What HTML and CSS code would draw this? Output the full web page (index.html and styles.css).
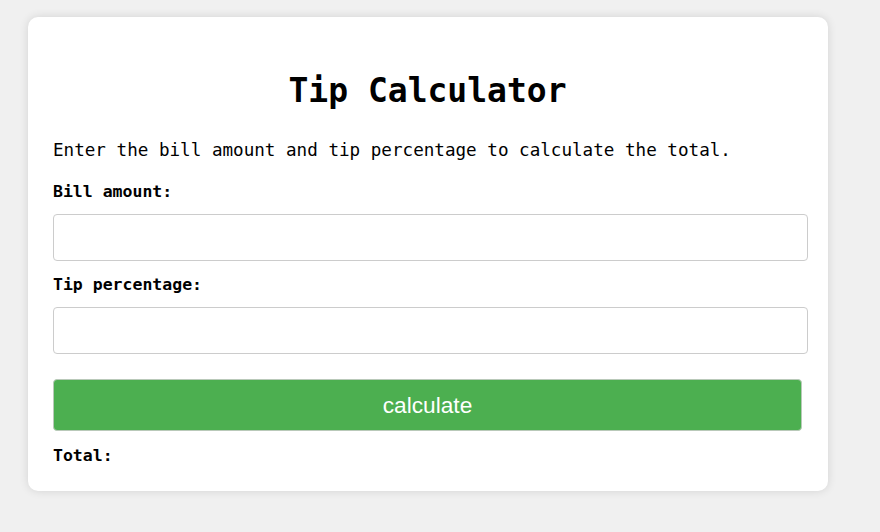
FILE: index.html
```html
<!DOCTYPE html>
<html>
<head>
<meta charset="utf-8">
<link rel="stylesheet" href="styles.css">
</head>
<body>
<div class="card">
  <h1 class="title">Tip Calculator</h1>
  <p class="intro">Enter the bill amount and tip percentage to calculate the total.</p>
  <label class="lbl lbl-bill" for="bill">Bill amount:</label>
  <input class="field field-bill" id="bill" type="text">
  <label class="lbl lbl-tip" for="tip">Tip percentage:</label>
  <input class="field field-tip" id="tip" type="text">
  <button class="calc">calculate</button>
  <div class="lbl total">Total:</div>
</div>
</body>
</html>
```
FILE: styles.css
```css
html, body {
  margin: 0;
  padding: 0;
  background: #f0f0f0;
  height: 100%;
}
body {
  font-family: "DejaVu Sans Mono", "Liberation Mono", monospace;
  color: #000;
}
.card {
  box-sizing: border-box;
  width: 800px;
  margin: 17px 0 0 28px;
  background: #fff;
  border-radius: 10px;
  box-shadow: 0 0 10px rgba(0, 0, 0, 0.12);
  padding: 54px 20px 24px 25px;
  display: flex;
  flex-direction: column;
  align-items: flex-start;
}
.title {
  align-self: stretch;
  text-align: center;
  font-size: 33px;
  line-height: 40px;
  margin: 0;
  font-weight: bold;
  padding-right: 6px;
}
.intro {
  margin: 27px 0 0;
  font-size: 17.6px;
  line-height: 24px;
}
.lbl {
  font-size: 16.5px;
  line-height: 22px;
  font-weight: bold;
}
.lbl-bill { margin-top: 19px; }
.lbl-tip { margin-top: 13px; }
.field {
  box-sizing: border-box;
  width: 755px;
  height: 47px;
  border: 1px solid #ccc;
  border-radius: 4px;
  background: #fff;
  font-size: 16px;
  padding: 8px;
}
.field-bill { margin-top: 11px; }
.field-tip { margin-top: 11px; }
.calc {
  box-sizing: border-box;
  margin-top: 25px;
  width: 749px;
  height: 52px;
  background: #4caf50;
  color: #fff;
  border: 1px solid #b9c9b9;
  border-radius: 4px;
  font-family: "Liberation Sans", Arial, sans-serif;
  font-size: 22.7px;
  padding: 0;
}
.total { margin-top: 14px; }
```
